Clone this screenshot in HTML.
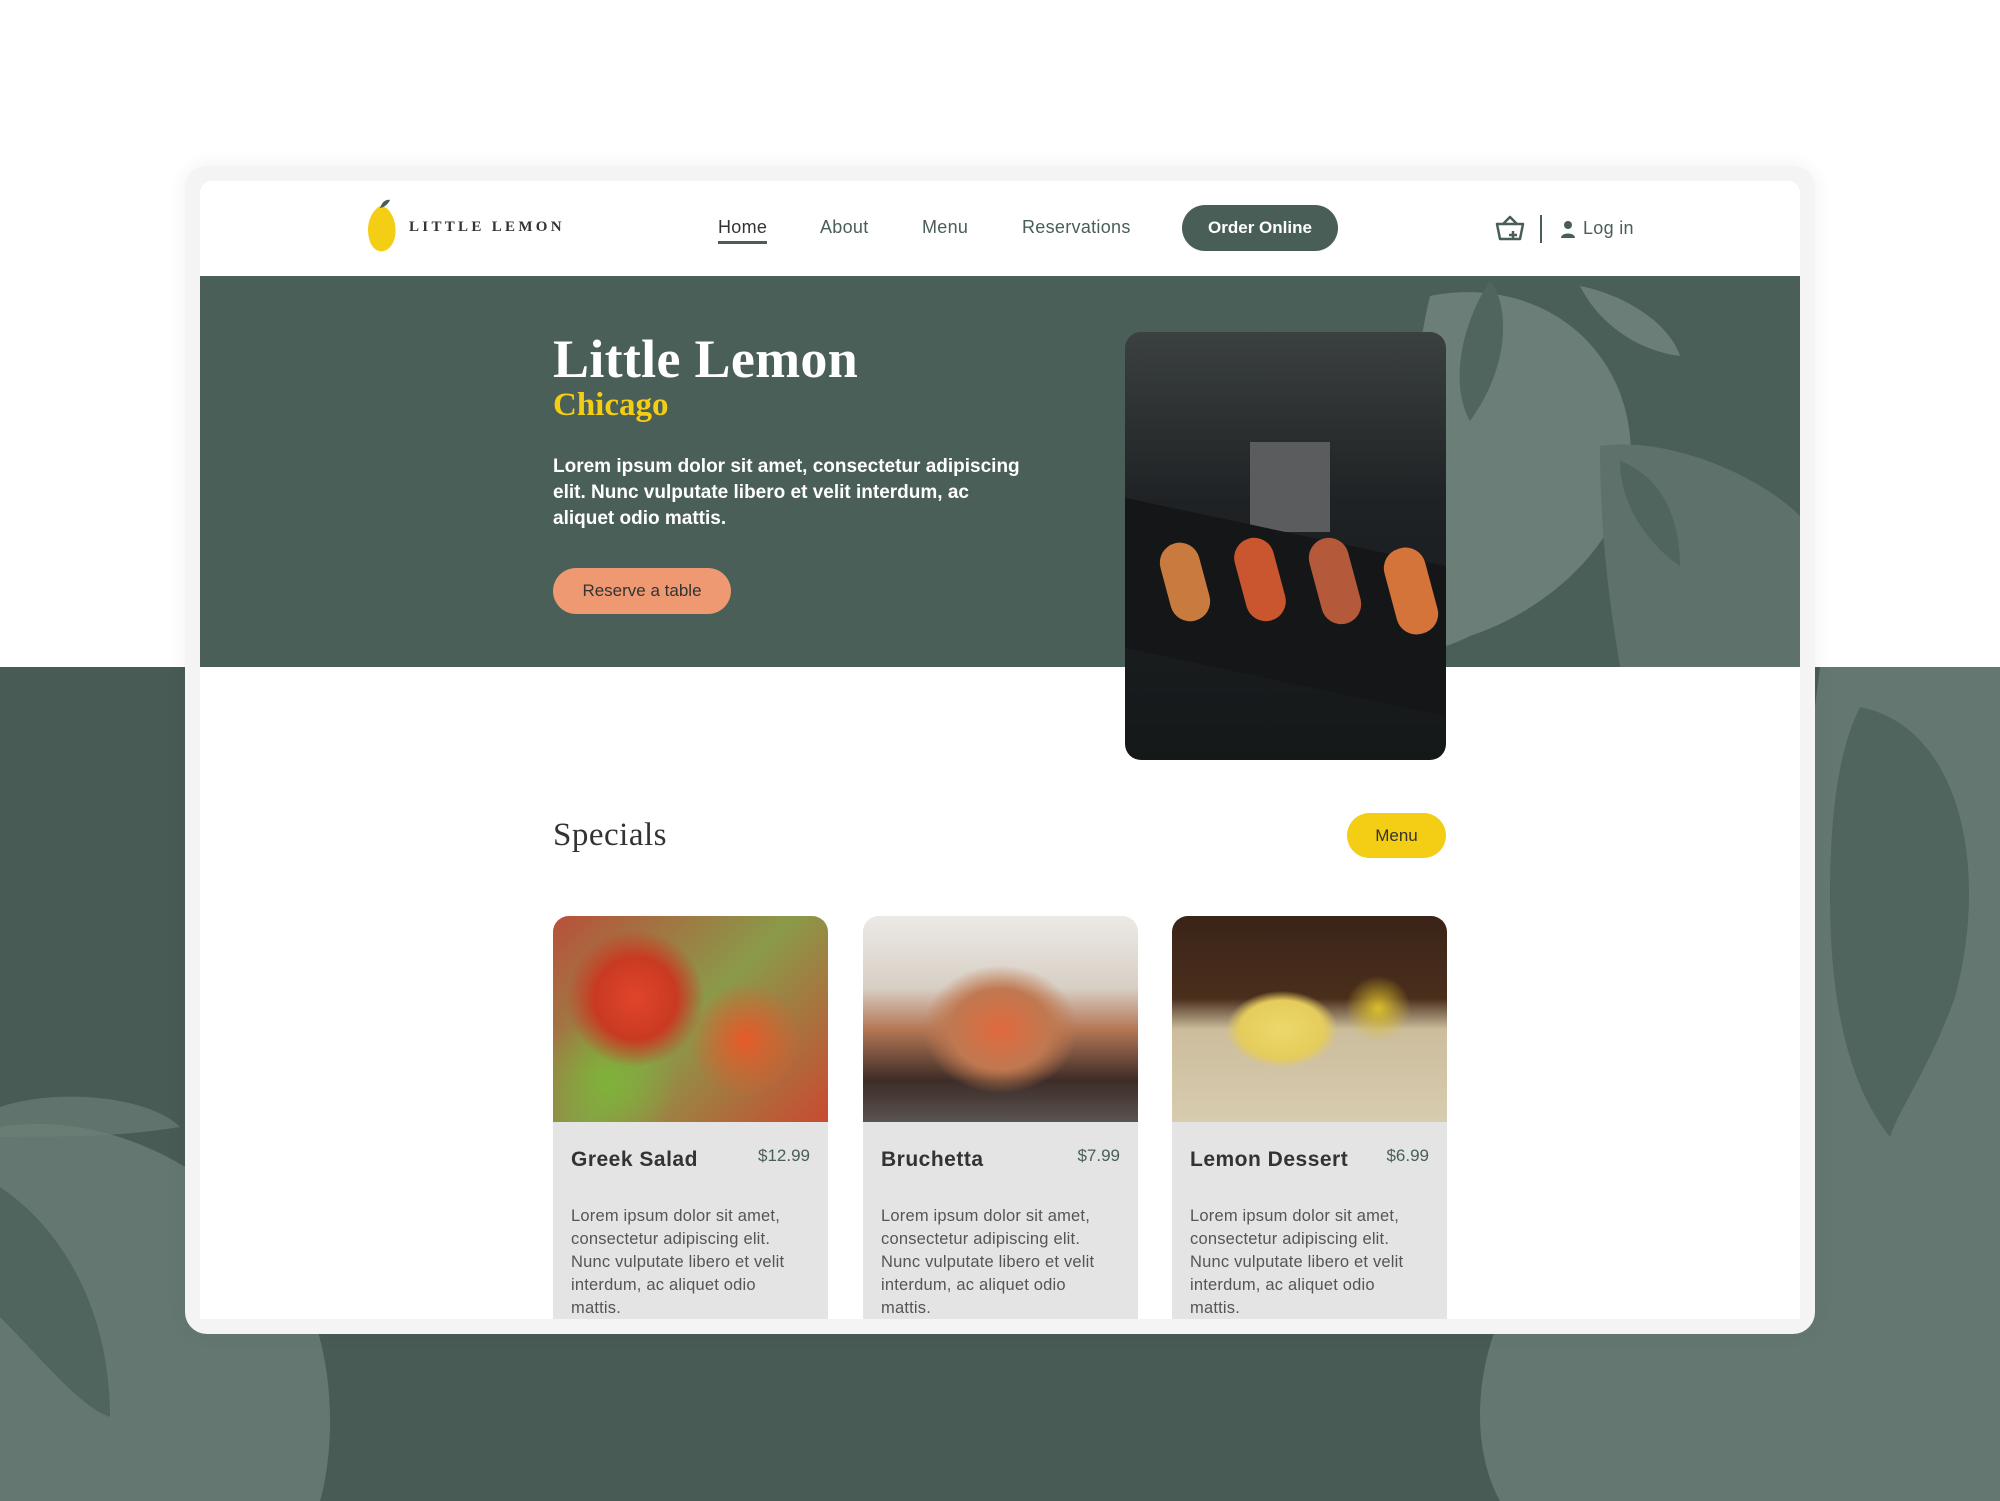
<!DOCTYPE html>
<html><head><meta charset="utf-8"><style>
*{margin:0;padding:0;box-sizing:border-box}
body{width:2000px;height:1501px;position:relative;overflow:hidden;background:#fff;font-family:"Liberation Sans",sans-serif}
.bg{position:absolute;left:0;top:667px;width:2000px;height:834px;background:#485c55;overflow:hidden}
.card{position:absolute;left:185px;top:166px;width:1630px;height:1168px;background:#f4f4f4;border-radius:22px;box-shadow:0 0 20px rgba(0,0,0,.06)}
.inner{position:absolute;left:200px;top:181px;width:1600px;height:1138px;background:#fff;border-radius:12px 12px 0 0;overflow:hidden}
.hdr{position:absolute;left:0;top:0;width:1600px;height:95px}
.nav{position:absolute;top:36px;font-size:18px;color:#495e57;letter-spacing:.3px}
.hero{position:absolute;left:0;top:95px;width:1600px;height:391px;background:#4a5f58;overflow:hidden}
.t{position:absolute;color:#333}
.c{position:absolute;width:275px;top:735px;height:420px;background:#e4e4e4;border-radius:16px 16px 0 0;overflow:hidden}
.c .img{height:206px}
.c h3{position:absolute;left:18px;top:232px;font-size:21px;font-weight:bold;color:#333;letter-spacing:.5px}
.c .p{position:absolute;right:18px;top:230px;font-size:17px;color:#495e57}
.c .d{position:absolute;left:18px;top:289px;width:236px;font-size:16.5px;line-height:23px;color:#555;letter-spacing:.2px}
</style></head><body>
<div class="bg">
<svg width="2000" height="834" viewBox="0 0 2000 834">
<path d="M1820 0 L2000 0 L2000 834 L1500 834 C1460 760 1480 640 1560 560 C1640 470 1700 360 1760 250 C1800 170 1810 80 1820 0Z" fill="#6b7f78" opacity=".8"/>
<path d="M1860 40 C1960 60 1990 200 1955 330 C1930 400 1900 440 1890 470 C1850 420 1830 340 1830 230 C1830 140 1840 80 1860 40Z" fill="#4f655d"/>
<path d="M0 460 C120 440 260 520 310 640 C340 720 330 800 320 834 L0 834Z" fill="#6b7f78" opacity=".8"/>
<path d="M0 520 C60 560 110 640 110 750 C80 740 40 690 0 650Z" fill="#4f655d"/>
<path d="M0 440 C60 420 150 430 180 460 C120 470 60 470 0 470Z" fill="#6b7f78" opacity=".7"/>
</svg>
</div>
<div class="card"></div>
<div class="inner">
 <div class="hdr">
  <svg style="position:absolute;left:166px;top:17px" width="34" height="56" viewBox="0 0 34 56"><path d="M14 8 C4 14 0 28 3 40 C5 50 12 55 18 53 C28 50 32 36 28 22 C25 13 20 8 14 8Z" fill="#f4ce14"/><path d="M14 10 C16 4 20 1 24 2 C22 6 19 9 14 10Z" fill="#495e57"/></svg>
  <div style="position:absolute;left:209px;top:38px;font-family:'Liberation Serif',serif;font-weight:bold;font-size:15px;letter-spacing:3.3px;color:#333">LITTLE LEMON</div>
  <div class="nav" style="left:518px;color:#333">Home</div>
  <div style="position:absolute;left:518px;top:60px;width:49px;height:3px;background:#495e57"></div>
  <div class="nav" style="left:620px">About</div>
  <div class="nav" style="left:722px">Menu</div>
  <div class="nav" style="left:822px">Reservations</div>
  <div style="position:absolute;left:982px;top:24px;width:156px;height:46px;border-radius:23px;background:#495e57;color:#fff;font-size:17px;font-weight:bold;text-align:center;line-height:46px">Order Online</div>
  <svg style="position:absolute;left:1295px;top:34px" width="30" height="28" viewBox="0 0 30 28"><path d="M2 9 H28 L25 24 H5 Z M8 9 L15 2 L22 9" fill="none" stroke="#495e57" stroke-width="2.5" stroke-linejoin="round"/><path d="M18 16 v8 M14 20 h8" stroke="#495e57" stroke-width="2.5"/></svg>
  <div style="position:absolute;left:1340px;top:34px;width:2px;height:28px;background:#495e57"></div>
  <svg style="position:absolute;left:1360px;top:39px" width="16" height="18" viewBox="0 0 16 18"><circle cx="8" cy="5" r="4" fill="#495e57"/><path d="M1 18 C1 12 15 12 15 18Z" fill="#495e57"/></svg>
  <div class="nav" style="left:1383px;top:37px">Log in</div>
 </div>
 <div class="hero">
  <svg style="position:absolute;left:0;top:0" width="1600" height="391" viewBox="0 0 1600 391">
   <path d="M1230 20 C1330 0 1420 60 1430 160 C1440 250 1360 330 1270 360 C1240 375 1210 380 1190 380 L1100 340 C1150 320 1200 260 1210 170 C1215 110 1220 60 1230 20Z" fill="#6b7f78"/>
   <path d="M1290 5 C1310 30 1310 90 1270 145 C1250 110 1260 50 1290 5Z" fill="#4f655d"/>
   <path d="M1380 10 C1430 20 1470 50 1480 80 C1440 75 1400 50 1380 10Z" fill="#6b7f78"/>
   <path d="M1400 170 C1470 160 1560 200 1600 240 L1600 391 L1420 391 C1410 330 1400 260 1400 170Z" fill="#5e726b"/>
   <path d="M1420 185 C1460 200 1480 240 1480 290 C1450 270 1420 230 1420 185Z" fill="#4f655d"/>
  </svg>
  <div class="t" style="left:353px;top:52px;font-family:'Liberation Serif',serif;font-size:54px;color:#fff;font-weight:bold;letter-spacing:.3px">Little Lemon</div>
  <div class="t" style="left:353px;top:111px;font-family:'Liberation Serif',serif;font-size:33px;color:#f4ce14;font-weight:bold">Chicago</div>
  <div class="t" style="left:353px;top:178px;width:468px;font-size:19px;line-height:26px;color:#fff;font-weight:bold">Lorem ipsum dolor sit amet, consectetur adipiscing elit. Nunc vulputate libero et velit interdum, ac aliquet odio mattis.</div>
  <div style="position:absolute;left:353px;top:292px;width:178px;height:46px;border-radius:23px;background:#ee9972;color:#333;font-size:17px;text-align:center;line-height:46px">Reserve a table</div>
 </div>
 <div style="position:absolute;left:925px;top:151px;width:321px;height:428px;border-radius:16px;overflow:hidden;background:linear-gradient(180deg,#3b4040 0%,#1e2224 40%,#151819 100%)">
  <div style="position:absolute;left:125px;top:110px;width:80px;height:90px;background:#5a5c5e"></div>
  <div style="position:absolute;left:0;top:200px;width:321px;height:150px;background:#141617;transform:skewY(12deg)"></div>
  <div style="position:absolute;left:40px;top:210px;width:40px;height:80px;border-radius:20px;background:#c97b3f;transform:rotate(-15deg)"></div>
  <div style="position:absolute;left:115px;top:205px;width:40px;height:85px;border-radius:20px;background:#c9562f;transform:rotate(-15deg)"></div>
  <div style="position:absolute;left:190px;top:205px;width:40px;height:88px;border-radius:20px;background:#b45a3a;transform:rotate(-15deg)"></div>
  <div style="position:absolute;left:265px;top:215px;width:42px;height:88px;border-radius:20px;background:#d4733a;transform:rotate(-15deg)"></div>
 </div>
 <div class="t" style="left:353px;top:636px;font-family:'Liberation Serif',serif;font-size:33px;letter-spacing:.5px">Specials</div>
 <div style="position:absolute;left:1147px;top:632px;width:99px;height:45px;border-radius:23px;background:#f4ce14;color:#333;font-size:17px;text-align:center;line-height:45px">Menu</div>
 <div class="c" style="left:353px"><div class="img" style="background:radial-gradient(circle at 30% 40%,#e0452a 0,#c93a22 18%,transparent 30%),radial-gradient(circle at 70% 60%,#e65a2a 0,transparent 25%),radial-gradient(circle at 20% 80%,#7fb33a 0,transparent 25%),linear-gradient(135deg,#b9503a,#8a9a4a 50%,#c94a32)"></div><h3>Greek Salad</h3><div class="p">$12.99</div><div class="d">Lorem ipsum dolor sit amet, consectetur adipiscing elit. Nunc vulputate libero et velit interdum, ac aliquet odio mattis.</div></div>
 <div class="c" style="left:663px"><div class="img" style="background:radial-gradient(ellipse at 50% 55%,#e06a3e 0,#c07850 25%,transparent 40%),linear-gradient(180deg,#eceae6 0%,#d7cfc4 35%,#b57755 55%,#3c2c27 80%,#5a5450 100%)"></div><h3>Bruchetta</h3><div class="p">$7.99</div><div class="d">Lorem ipsum dolor sit amet, consectetur adipiscing elit. Nunc vulputate libero et velit interdum, ac aliquet odio mattis.</div></div>
 <div class="c" style="left:972px"><div class="img" style="background:radial-gradient(ellipse at 40% 55%,#ecd86a 0,#e5cc5c 18%,transparent 24%),radial-gradient(circle at 75% 45%,#d9bd2c 0,transparent 14%),linear-gradient(180deg,#3a2418 0%,#4a2e1c 40%,#cbbd9c 55%,#d8ccb0 100%)"></div><h3>Lemon Dessert</h3><div class="p">$6.99</div><div class="d">Lorem ipsum dolor sit amet, consectetur adipiscing elit. Nunc vulputate libero et velit interdum, ac aliquet odio mattis.</div></div>
</div>
</body></html>
